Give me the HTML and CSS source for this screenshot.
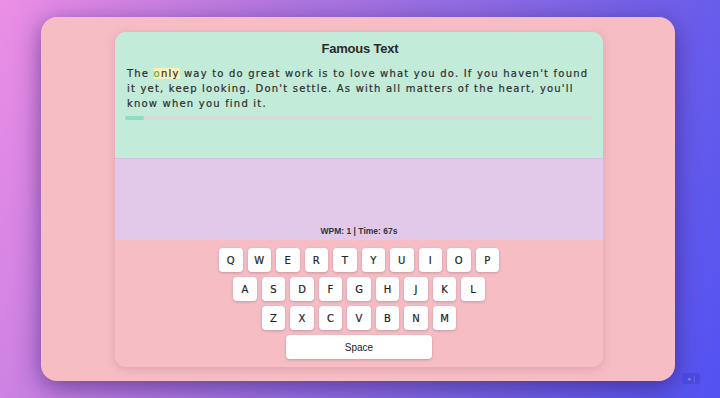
FILE: index.html
```html
<!DOCTYPE html>
<html lang="en">
<head>
  <meta charset="UTF-8" />
  <meta name="viewport" content="width=device-width, initial-scale=1.0" />
  <title>Famous Text Typing</title>
  <link rel="stylesheet" href="styles.css">
</head>
<body>
  <div class="stage">
    <div class="frame">
      <div class="app">
        <div class="quote-box">
          <h2>Famous Text</h2>
          <p class="quote">The <span class="current"><span class="typed">o</span>nly</span> way to do great work is to love what you do. If you haven't found it yet, keep looking. Don't settle. As with all matters of the heart, you'll know when you find it.</p>
          <div class="progress"><div class="progress-fill" style="width: 4%;"></div></div>
        </div>
        <div class="input-area">
          <div class="stats">WPM: 1 | Time: 67s</div>
        </div>
        <div class="keyboard">
          <div class="row">
            <button class="key">Q</button><button class="key">W</button><button class="key">E</button><button class="key">R</button><button class="key">T</button><button class="key">Y</button><button class="key">U</button><button class="key">I</button><button class="key">O</button><button class="key">P</button>
          </div>
          <div class="row">
            <button class="key">A</button><button class="key">S</button><button class="key">D</button><button class="key">F</button><button class="key">G</button><button class="key">H</button><button class="key">J</button><button class="key">K</button><button class="key">L</button>
          </div>
          <div class="row">
            <button class="key">Z</button><button class="key">X</button><button class="key">C</button><button class="key">V</button><button class="key">B</button><button class="key">N</button><button class="key">M</button>
          </div>
          <div class="row">
            <button class="key space">Space</button>
          </div>
        </div>
      </div>
    </div>
    <div class="badge">&#9679; |</div>
  </div>
</body>
</html>
```
FILE: styles.css
```css
html, body { margin: 0; padding: 0; height: 100%; }
body { font-family: "Liberation Sans", Arial, sans-serif; color: #333; overflow: hidden; }
.stage { position: relative; height: 398px; padding: 17px 45px 0 41px; box-sizing: border-box; background: linear-gradient(110deg, #ec8ee6 0%, #b779e0 30%, #7a64e6 70%, #5252f2 100%); }
.frame { width: 634px; height: 364px; box-sizing: border-box; padding: 15px 72px 14px 74px; background: #f6bdc5; border-radius: 16px; box-shadow: 0 6px 24px rgba(40, 20, 90, 0.55); }
.app { height: 100%; display: flex; flex-direction: column; border-radius: 11px; overflow: hidden; box-shadow: 0 2px 8px rgba(150, 80, 100, 0.25); }
.quote-box { background: #c3ebd9; padding: 9px 10px 0 12px; height: 126px; box-sizing: border-box; }
.quote-box h2 { margin: 0 0 10px; text-align: center; font-size: 13px; font-weight: bold; color: #2b2b2b; letter-spacing: -0.2px; }
.quote { margin: 0; font-family: "DejaVu Sans", Verdana, sans-serif; font-size: 10px; letter-spacing: 1.2px; line-height: 15px; color: #2e2e2e; -webkit-text-stroke: 0.2px #2e2e2e; }
.current { background: #fdf1b8; }
.typed { color: #4caf50; -webkit-text-stroke: 0.2px #4caf50; }
.progress { margin-top: 5px; margin-left: -2px; height: 4px; background: #d9d9d9; border-radius: 2px; }
.progress-fill { height: 100%; background: #8fdcc2; border-radius: 2px; }
.input-area { background: #e2c9ea; height: 82px; display: flex; align-items: flex-end; justify-content: center; padding-bottom: 4px; box-sizing: border-box; border-top: 1px solid #d6c0e2; }
.stats { font-size: 8.5px; font-weight: bold; color: #333; }
.keyboard { flex: 1; background: #f6bdc5; padding-top: 8px; display: flex; flex-direction: column; align-items: center; gap: 5px; }
.row { display: flex; gap: 5px; }
.key { width: 23.5px; height: 24px; padding: 0; border: none; border-radius: 4px; background: #fff; font-family: "DejaVu Sans", Verdana, sans-serif; font-size: 10px; color: #222; -webkit-text-stroke: 0.2px #222; box-shadow: 0 1px 3px rgba(0, 0, 0, 0.2); }
.key.space { width: 146px; font-family: "Liberation Sans", Arial, sans-serif; font-size: 10px; -webkit-text-stroke: 0; }
.badge { position: absolute; right: 20px; bottom: 14px; padding: 2px 5px; font-size: 7px; color: #7b7bd8; background: #4848de; border-radius: 3px; }
```
